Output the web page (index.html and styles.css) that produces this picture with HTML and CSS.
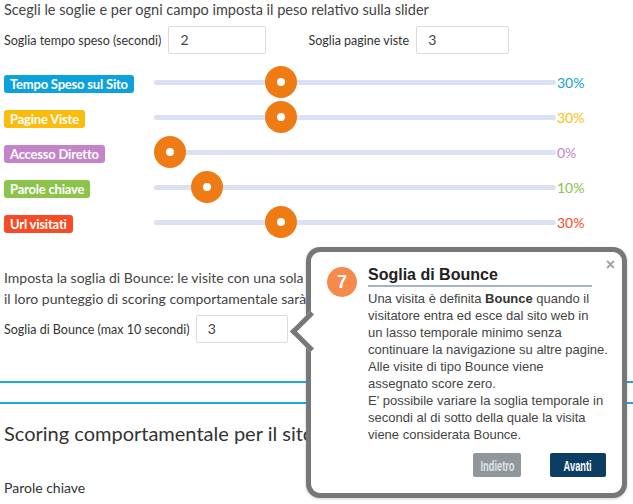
FILE: index.html
```html
<!DOCTYPE html>
<html lang="it">
<head>
<meta charset="utf-8">
<title>Scoring comportamentale</title>
<link rel="stylesheet" href="styles.css">
</head>
<body>
<div class="page">
  <p class="intro">Scegli le soglie e per ogni campo imposta il peso relativo sulla slider</p>
  <div class="thresholds">
    <div class="field">
      <span class="field-label">Soglia tempo speso (secondi)</span>
      <span class="input input-time">2</span>
    </div>
    <div class="field field-second">
      <span class="field-label">Soglia pagine viste</span>
      <span class="input input-pages">3</span>
    </div>
  </div>

  <div class="sliders">
    <div class="srow">
      <div class="badge-col"><span class="badge c-blue">Tempo Speso sul Sito</span></div>
      <div class="track"><span class="thumb" style="--v:0.3"></span></div>
      <span class="pct t-blue">30%</span>
    </div>
    <div class="srow">
      <div class="badge-col"><span class="badge c-yellow">Pagine Viste</span></div>
      <div class="track"><span class="thumb" style="--v:0.3"></span></div>
      <span class="pct t-yellow">30%</span>
    </div>
    <div class="srow">
      <div class="badge-col"><span class="badge c-purple">Accesso Diretto</span></div>
      <div class="track"><span class="thumb" style="--v:0"></span></div>
      <span class="pct t-purple">0%</span>
    </div>
    <div class="srow">
      <div class="badge-col"><span class="badge c-green">Parole chiave</span></div>
      <div class="track"><span class="thumb" style="--v:0.1"></span></div>
      <span class="pct t-green">10%</span>
    </div>
    <div class="srow">
      <div class="badge-col"><span class="badge c-red">Url visitati</span></div>
      <div class="track"><span class="thumb" style="--v:0.3"></span></div>
      <span class="pct t-red">30%</span>
    </div>
  </div>

  <p class="bounce-text">Imposta la soglia di Bounce: le visite con una sola pagina vista e durata inferiore alla soglia indicata, q<br>il loro punteggio di scoring comportamentale sarà azzerato.</p>
  <div class="field bounce-field">
    <span class="field-label">Soglia di Bounce (max 10 secondi)</span>
    <span class="input input-bounce">3</span>
  </div>

  <div class="sep sep-first"></div>
  <div class="sep sep-second"></div>

  <h2 class="section-title">Scoring comportamentale per il sito corrente</h2>
  <h4 class="sub-title">Parole chiave</h4>
  <p class="sub-text">Inserisci le parole chiave e imposta per ognuna di esse il punteggio comportamentale da attribuire</p>
</div>

<div class="popover">
  <span class="pop-close">&times;</span>
  <span class="step">7</span>
  <div class="pop-content">
    <h3 class="pop-title">Soglia di Bounce</h3>
    <p class="pop-body">Una visita è definita <b>Bounce</b> quando il<br>visitatore entra ed esce dal sito web in<br>un lasso temporale minimo senza<br>continuare la navigazione su altre pagine.<br>Alle visite di tipo Bounce viene<br>assegnato score zero.<br>E' possibile variare la soglia temporale in<br>secondi al di sotto della quale la visita<br>viene considerata Bounce.</p>
  </div>
  <div class="pop-actions">
    <span class="btn btn-back"><span class="btn-text">Indietro</span></span>
    <span class="btn btn-next"><span class="btn-text">Avanti</span></span>
  </div>
</div>
</body>
</html>
```

FILE: styles.css
```css
* { box-sizing: border-box; }

html, body {
  margin: 0;
  padding: 0;
  background: #fff;
  overflow: hidden;
}

body {
  width: 633px;
  height: 504px;
  position: relative;
  font-family: "Lato", "Open Sans", sans-serif;
  color: #444;
}

.page {
  padding: 0 0 0 4px;
}

.intro {
  margin: 0;
  font-size: 14.5px;
  line-height: 20px;
  color: #444;
}

.thresholds {
  display: flex;
  margin-top: 6px;
  height: 28px;
}

.field {
  display: flex;
  align-items: center;
  gap: 7px;
}

.field-second {
  margin-left: 42px;
}

.field-label {
  font-size: 12.5px;
  color: #333;
}

.input {
  display: block;
  height: 28px;
  line-height: 26px;
  border: 1px solid #dcdcdc;
  border-radius: 2px;
  padding-left: 11px;
  font-size: 14px;
  color: #444;
}

.input-time { width: 98px; }
.input-pages { width: 93px; }
.input-bounce { width: 92px; margin-left: -1px; }

.sliders {
  margin-top: 11px;
}

.srow {
  display: flex;
  align-items: center;
  height: 35px;
}

.badge-col {
  width: 150px;
  flex: none;
}

.badge {
  display: inline-block;
  height: 18px;
  line-height: 18px;
  padding: 0 6px;
  border-radius: 3px;
  color: #fff;
  font-weight: 700;
  font-size: 13px;
  letter-spacing: -0.2px;
}

.c-blue { background: #0ea2dd; }
.c-yellow { background: #fdbc0b; }
.c-purple { background: #c384c9; }
.c-green { background: #8cc34b; }
.c-red { background: #f84b25; }

.t-blue { color: #0ea2dd; }
.t-yellow { color: #fdbc0b; }
.t-purple { color: #c384c9; }
.t-green { color: #8cc34b; }
.t-red { color: #f84b25; }

.track {
  position: relative;
  width: 402px;
  height: 5px;
  border-radius: 3px;
  background: #d9e1f2;
  flex: none;
}

.thumb {
  position: absolute;
  top: -14px;
  left: calc(var(--v) * (100% - 32px));
  width: 32px;
  height: 32px;
  border-radius: 50%;
  background: #ef7b15;
}

.thumb::after {
  content: "";
  position: absolute;
  left: 12px;
  top: 12px;
  width: 8px;
  height: 8px;
  border-radius: 50%;
  background: #fff;
}

.pct {
  margin-left: 1px;
  font-size: 14px;
}

.bounce-text {
  margin: 27px 0 0;
  font-size: 14px;
  line-height: 21px;
  color: #444;
  white-space: nowrap;
  overflow: hidden;
}

.bounce-field {
  margin-top: 6px;
  height: 28px;
}

.sep {
  height: 2px;
  background: #1ca8e2;
  margin-left: -4px;
}

.sep-first { margin-top: 38px; }
.sep-second { margin-top: 19px; }

.section-title {
  margin: 17px 0 0;
  font-size: 20px;
  line-height: 24px;
  font-weight: 400;
  color: #333;
}

.sub-title {
  margin: 33px 0 0;
  font-size: 14px;
  line-height: 20px;
  font-weight: 400;
  color: #333;
}

.sub-text {
  margin: 2px 0 0;
  font-size: 14px;
  line-height: 20px;
  white-space: nowrap;
}

/* Popover */
.popover {
  position: absolute;
  left: 306px;
  top: 247px;
  width: 321px;
  height: 251px;
  background: #fff;
  border: 5px solid #777;
  border-radius: 14px;
  font-family: "Liberation Sans", Arial, sans-serif;
  color: #444;
  box-shadow: 0 1px 3px rgba(0,0,0,0.2);
}

.popover::before {
  content: "";
  position: absolute;
  left: -15px;
  top: 65px;
  width: 24px;
  height: 24px;
  background: #fff;
  border-left: 5px solid #777;
  border-bottom: 5px solid #777;
  transform: rotate(45deg);
}

.pop-close {
  position: absolute;
  right: 7px;
  top: 3px;
  font-size: 16px;
  font-weight: 700;
  color: #a0a0a0;
  line-height: 20px;
}

.step {
  position: absolute;
  left: 16px;
  top: 15px;
  width: 30px;
  height: 30px;
  border-radius: 50%;
  background: #f68a4c;
  color: #fff;
  font-weight: 700;
  font-size: 18px;
  line-height: 30px;
  text-align: center;
}

.pop-content {
  position: relative;
  margin-left: 57px;
  padding-top: 13px;
}

.pop-title {
  margin: 0;
  width: 224px;
  font-size: 16px;
  line-height: 20px;
  font-weight: 700;
  color: #222;
  border-bottom: 2px solid #a3b3bf;
}

.pop-body {
  margin: 3px 0 0;
  font-size: 13px;
  line-height: 17px;
  color: #444;
  white-space: nowrap;
}

.pop-body b {
  color: #333;
}

.pop-actions {
  display: flex;
  justify-content: flex-end;
  gap: 29px;
  padding-right: 16px;
  margin-top: 10px;
}

.btn {
  display: flex;
  align-items: center;
  justify-content: center;
  height: 24px;
  border-radius: 2px;
  font-family: "Liberation Sans", Arial, sans-serif;
  font-weight: 700;
  font-size: 15px;
}

.btn-text {
  display: inline-block;
  transform: scaleX(0.62);
  white-space: nowrap;
}

.btn-back {
  width: 48px;
  background: #8f979b;
  color: #dfe3e5;
}

.btn-next {
  width: 56px;
  background: #0c3e64;
  color: #fff;
}
```
